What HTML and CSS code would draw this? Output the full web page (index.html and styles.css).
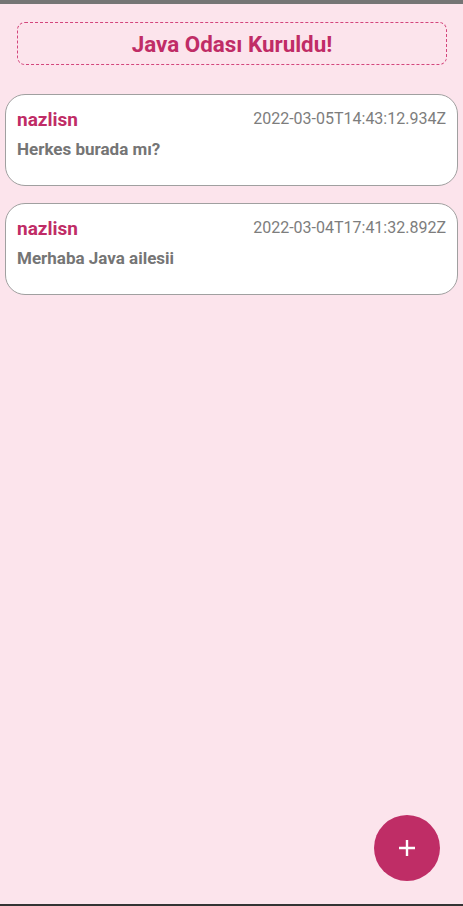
FILE: index.html
```html
<!DOCTYPE html>
<html lang="tr">
<head>
<meta charset="utf-8">
<title>Java Odası</title>
<link rel="stylesheet" href="styles.css">
</head>
<body>
<div class="statusbar"></div>
<main class="screen">
  <div class="room-title">Java Odası Kuruldu!</div>
  <ul class="messages">
    <li class="card">
      <div class="card-head">
        <span class="user">nazlisn</span>
        <span class="time">2022-03-05T14:43:12.934Z</span>
      </div>
      <p class="text">Herkes burada mı?</p>
    </li>
    <li class="card">
      <div class="card-head">
        <span class="user">nazlisn</span>
        <span class="time">2022-03-04T17:41:32.892Z</span>
      </div>
      <p class="text">Merhaba Java ailesii</p>
    </li>
  </ul>
</main>
<button class="fab" aria-label="Ekle">
  <svg width="20" height="20" viewBox="0 0 20 20"><path d="M10 2v16M2 10h16" stroke="#fff" stroke-width="2.4" fill="none"/></svg>
</button>
<div class="bottom-line"></div>
</body>
</html>
```
FILE: styles.css
```css
html, body {
  margin: 0;
  padding: 0;
  height: 100%;
}
body {
  background: #fce4ec;
  font-family: Roboto, "Noto Sans", sans-serif;
  overflow: hidden;
}
.statusbar {
  height: 4px;
  background: #757575;
}
.screen {
  display: flex;
  flex-direction: column;
}
.room-title {
  margin: 18px 16px 0 17px;
  height: 41px;
  border: 1px dashed #d3467c;
  border-radius: 8px;
  display: flex;
  align-items: center;
  justify-content: center;
  color: #c02c66;
  font-weight: 700;
  font-size: 22.4px;
}
.messages {
  list-style: none;
  margin: 29px 0 0 0;
  padding: 0 5px 0 5px;
  display: flex;
  flex-direction: column;
  gap: 17px;
}
.card {
  background: #fff;
  border: 1px solid #a0a0a0;
  border-radius: 20px;
  padding: 12px 11px 0 11px;
  box-sizing: content-box;
  height: 78px;
}
.card-head {
  display: flex;
  justify-content: space-between;
  align-items: flex-start;
}
.user {
  color: #c02c66;
  font-weight: 700;
  font-size: 19px;
  line-height: 26px;
}
.time {
  margin-top: 1px;
  color: #7d7d7d;
  font-size: 16px;
  line-height: 22px;
}
.text {
  margin: 5px 0 0 0;
  color: #757575;
  font-weight: 700;
  font-size: 17px;
  line-height: 22px;
}
.fab {
  position: fixed;
  right: 23px;
  bottom: 25px;
  width: 66px;
  height: 66px;
  border-radius: 50%;
  border: none;
  background: #bf2d66;
  display: flex;
  align-items: center;
  justify-content: center;
  padding: 0;
}
.fab svg { display: block; }
.bottom-line {
  position: fixed;
  left: 0;
  right: 0;
  bottom: 0;
  height: 2px;
  background: #333;
}
```
